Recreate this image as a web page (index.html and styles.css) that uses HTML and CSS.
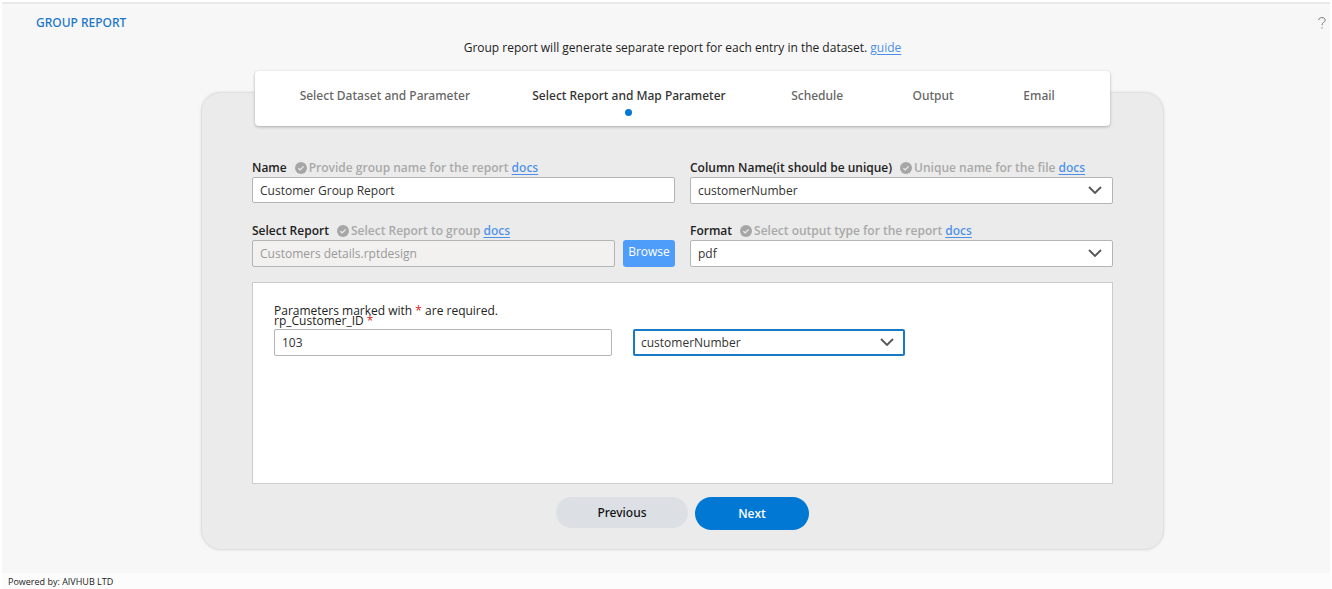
FILE: index.html
```html
<!DOCTYPE html>
<html lang="en">
<head>
<meta charset="utf-8">
<title>Group Report</title>
<link rel="stylesheet" href="styles.css">
</head>
<body>
<svg class="symbols" aria-hidden="true">
  <symbol id="check" viewBox="0 0 12 12"><circle cx="6" cy="6" r="6" fill="#a6a6a6"/><path d="M3.4 6.2l1.8 1.7 3.4-3.5" fill="none" stroke="#ececec" stroke-width="1.3"/></symbol>
  <symbol id="chevron" viewBox="0 0 14 8"><path d="M1 1l6 6 6-6" fill="none" stroke="#555" stroke-width="1.8"/></symbol>
</svg>
<div class="page">
  <header class="header">
    <h1 class="title">GROUP REPORT</h1>
    <button class="help" type="button" aria-label="Help"><svg width="8" height="12" viewBox="0 0 8 12"><path d="M.7 3C.7 1.500 2 .6 3.900.6S7.200 1.600 7.200 3.100C7.200 5.200 4 5.300 4 8.300M4 10.200v1.300" fill="none" stroke="#777" stroke-width="1"/></svg></button>
  </header>
  <main class="main">
    <p class="intro">Group report will generate separate report for each entry in the dataset. <a href="#" class="link">guide</a></p>
    <section class="panel">
      <nav class="steps">
        <a href="#" class="step">Select Dataset and Parameter</a>
        <a href="#" class="step active">Select Report and Map Parameter</a>
        <a href="#" class="step">Schedule</a>
        <a href="#" class="step">Output</a>
        <a href="#" class="step">Email</a>
      </nav>
      <form class="form">
        <div class="field">
          <div class="caption"><label for="name">Name</label><svg class="check"><use href="#check"/></svg><span class="hint">Provide group name for the report <a href="#" class="link">docs</a></span></div>
          <input id="name" class="control short" type="text" value="Customer Group Report">
        </div>
        <div class="field">
          <div class="caption"><label for="column">Column Name(it should be unique)</label><svg class="check"><use href="#check"/></svg><span class="hint">Unique name for the file <a href="#" class="link">docs</a></span></div>
          <div class="dropdown"><select id="column" class="control"><option>customerNumber</option></select><svg class="chevron"><use href="#chevron"/></svg></div>
        </div>
        <div class="field">
          <div class="caption"><label for="report">Select Report</label><svg class="check"><use href="#check"/></svg><span class="hint">Select Report to group <a href="#" class="link">docs</a></span></div>
          <div class="picker"><input id="report" class="control" type="text" value="Customers details.rptdesign" disabled><button class="browse" type="button">Browse</button></div>
        </div>
        <div class="field">
          <div class="caption"><label for="format">Format</label><svg class="check"><use href="#check"/></svg><span class="hint">Select output type for the report <a href="#" class="link">docs</a></span></div>
          <div class="dropdown"><select id="format" class="control"><option>pdf</option></select><svg class="chevron"><use href="#chevron"/></svg></div>
        </div>
        <div class="params">
          <p class="line">Parameters marked with <span class="star">*</span> are required.</p>
          <label class="line" for="customer">rp_Customer_ID <span class="star">*</span></label>
          <div class="mapping">
            <input id="customer" class="control" type="text" value="103">
            <div class="dropdown"><select class="control focused" aria-label="Mapped column"><option>customerNumber</option></select><svg class="chevron"><use href="#chevron"/></svg></div>
          </div>
        </div>
      </form>
      <div class="actions">
        <button class="previous" type="button">Previous</button>
        <button class="next" type="button">Next</button>
      </div>
    </section>
  </main>
  <footer class="footer">Powered by: AIVHUB LTD</footer>
</div>
</body>
</html>
```
FILE: styles.css
```css
* { box-sizing: border-box; }
body {
  margin: 0;
  background: #fff;
  color: #222;
  font: 12px/16px "Open Sans", "Noto Sans", sans-serif;
}
h1, p { margin: 0; }
button, input, select { font: inherit; color: inherit; }
button { border: 0; padding: 0; }
.symbols { position: absolute; width: 0; height: 0; }
.page {
  display: flex;
  flex-direction: column;
  min-height: 100vh;
  padding: 2px 2px 0;
}
.header {
  display: flex;
  justify-content: space-between;
  align-items: center;
  height: 38px;
  padding: 2px 4px 0 34px;
  border-top: 2px solid #e9e9e9;
  background: #f7f7f7;
}
.title { color: #1976c9; font: 500 12px/16px "Noto Sans", sans-serif; }
.help { display: flex; background: none; }
.main {
  flex: 1;
  padding: 0 166px 23px 199px;
  background: #f7f7f7;
}
.intro { text-align: center; }
.link { color: #4a90e8; font-weight: 400; text-underline-offset: 2px; }
.hint .link { font-family: "Noto Sans", sans-serif; font-weight: 500; }
.panel {
  margin-top: 36px;
  padding: 0 50px 19px;
  border: 1px solid #e0e0e0;
  border-radius: 20px;
  background: #ebebeb;
  box-shadow: 0 0 3px #ddd;
}
.steps {
  display: grid;
  grid-template-columns: minmax(0, 162fr) minmax(0, 185fr) minmax(0, 50fr) minmax(0, 40fr) minmax(0, 30fr);
  column-gap: 71px;
  height: 55px;
  margin: -22px 3px 0;
  padding: 17px 56px 0 49px;
  border-radius: 4px;
  background: #fff;
  box-shadow: 0 1px 3px #aaa;
}
.step {
  display: flex;
  flex-direction: column;
  align-items: center;
  color: #666;
  font-family: "Noto Sans", sans-serif;
  font-weight: 500;
  text-decoration: none;
  white-space: nowrap;
}
.active { color: #333; }
.active::after {
  content: "";
  width: 7px;
  height: 7px;
  margin-top: 5px;
  border-radius: 50%;
  background: #0078d4;
}
.form {
  display: grid;
  grid-template-columns: 1fr 1fr;
  gap: 19px 15px;
  margin-top: 34px;
}
.caption {
  display: flex;
  align-items: center;
  height: 17px;
  padding-bottom: 2px;
  font-weight: 600;
  white-space: nowrap;
}
.check { width: 12px; height: 12px; margin: 0 2px 0 8px; }
.hint { color: #a9a9a9; }
.control {
  display: block;
  width: 100%;
  height: 27px;
  padding: 0 7px;
  border: 1px solid #b5b5b5;
  border-radius: 2px;
  background: #fff;
  color: #333;
  appearance: none;
  outline: 0;
}
.short { height: 26px; }
.control:disabled { background: #f2f1f0; color: #999; }
.focused { padding: 0 6px; border: 2px solid #1979c4; }
.dropdown { position: relative; }
.chevron {
  position: absolute;
  top: 9px;
  right: 11px;
  width: 14px;
  height: 8px;
  pointer-events: none;
}
.picker { display: flex; gap: 8px; }
.browse {
  flex: 0 0 52px;
  padding-bottom: 3px;
  border-radius: 3px;
  background: #4f9dfb;
  color: #fff;
}
.params {
  grid-column: 1 / -1;
  min-height: 202px;
  margin-top: -4px;
  padding: 23px 21px;
  border: 1px solid #ccc;
  background: #fff;
}
.line { display: block; line-height: 10px; }
.star { color: #e02020; }
.mapping {
  display: grid;
  grid-template-columns: 338fr 272fr 165fr;
  gap: 21px;
  margin-top: 3px;
}
.actions {
  display: flex;
  justify-content: center;
  align-items: flex-start;
  gap: 7px;
  margin-top: 13px;
}
.previous, .next { border-radius: 17px; }
.previous {
  width: 132px;
  height: 31px;
  background: #dce0e5;
  color: #111;
  font-family: "Noto Sans", sans-serif;
  font-weight: 500;
}
.next { width: 114px; height: 33px; background: #0078d4; color: #fff; font-weight: 600; }
.footer {
  padding: 1px 6px;
  background: #fcfcfc;
  font-size: 9px;
  line-height: 15px;
}
```
